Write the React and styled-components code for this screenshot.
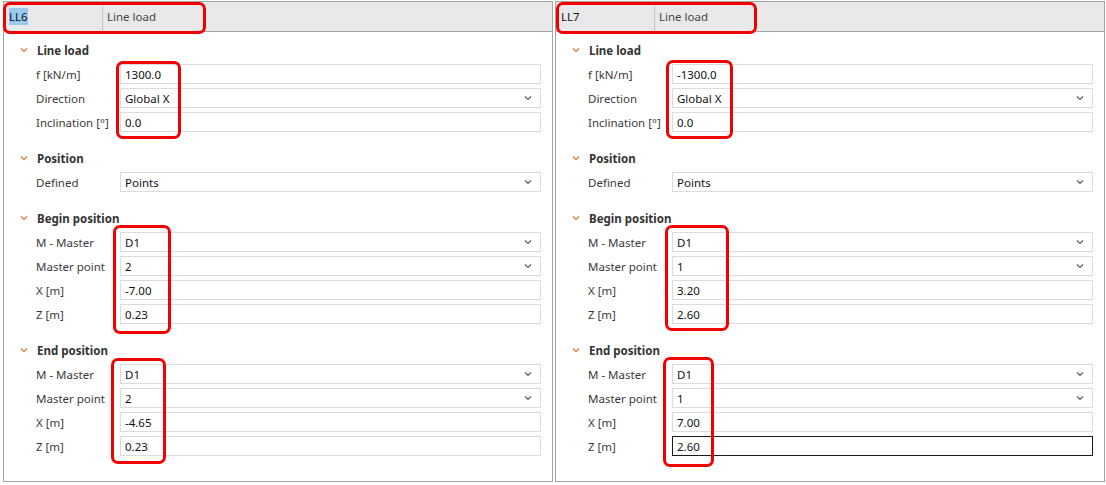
import React from "react";
import styled, { createGlobalStyle } from "styled-components";

const GlobalStyle = createGlobalStyle`
  html, body { margin: 0; padding: 0; background: #ffffff; }
  body { font-family: "Noto Sans", "Liberation Sans", sans-serif; font-size: 11.5px; color: #333; }
`;

const Page = styled.div`
  display: flex;
  gap: 2px;
  padding: 1px 0 0 3px;
`;

const Panel = styled.div`
  position: relative;
  box-sizing: border-box;
  width: ${(p) => p.$w}px;
  height: 481px;
  border: 1px solid #a3a3a3;
  background: #fff;
`;

const Header = styled.div`
  display: flex;
  height: 29px;
  background: #e9e9e9;
  border-bottom: 1px solid #a3a3a3;
`;

const IdCell = styled.div`
  width: 99px;
  border-right: 1px solid #c4c4c4;
  display: flex;
  align-items: center;
  padding-left: 5px;
  box-sizing: border-box;
  color: #111;
`;

const Selected = styled.span`
  background: ${(p) => (p.$sel ? "#99c9ef" : "transparent")};
  padding: 1px 0;
`;

const NameCell = styled.div`
  display: flex;
  align-items: center;
  padding-left: 4px;
  color: #444;
`;

const Body = styled.div`
  padding: 6px 11px 0 0;
`;

const Section = styled.div`
  margin-bottom: 12px;
`;

const SectionHead = styled.div`
  height: 24px;
  display: flex;
  align-items: center;
  padding-left: 16px;
  font-weight: 700;
  color: #333;
  gap: 9px;
`;

const Row = styled.div`
  display: grid;
  grid-template-columns: 116px 1fr;
  height: 24px;
  align-items: center;
`;

const Label = styled.div`
  padding-left: 32px;
  color: #3a3a3a;
  white-space: nowrap;
`;

const Field = styled.div`
  box-sizing: border-box;
  height: 20px;
  border: 1px solid ${(p) => (p.$focus ? "#1a1a1a" : "#dcdcdc")};
  display: flex;
  align-items: center;
  justify-content: space-between;
  padding: 0 8px 0 4px;
  color: #111;
`;

const Mark = styled.div`
  position: absolute;
  box-sizing: border-box;
  border: 3px solid #f20000;
  border-radius: 7px;
  pointer-events: none;
`;

const Chevron = ({ color = "#e8742a" }) => (
  <svg width="8" height="6" viewBox="0 0 8 6">
    <path d="M1 1.5 L4 4.5 L7 1.5" fill="none" stroke={color} strokeWidth="1.1" />
  </svg>
);

const makeSections = (v) => [
  {
    title: "Line load",
    rows: [
      { label: "f [kN/m]", value: v.f },
      { label: "Direction", value: "Global X", select: true },
      { label: "Inclination [°]", value: "0.0" },
    ],
  },
  { title: "Position", rows: [{ label: "Defined", value: "Points", select: true }] },
  {
    title: "Begin position",
    rows: [
      { label: "M - Master", value: "D1", select: true },
      { label: "Master point", value: v.bp, select: true },
      { label: "X [m]", value: v.bx },
      { label: "Z [m]", value: v.bz },
    ],
  },
  {
    title: "End position",
    rows: [
      { label: "M - Master", value: "D1", select: true },
      { label: "Master point", value: v.ep, select: true },
      { label: "X [m]", value: v.ex },
      { label: "Z [m]", value: v.ez, focus: v.focusLast },
    ],
  },
];

const panels = [
  {
    id: "LL6",
    sel: true,
    w: 550,
    values: { f: "1300.0", bp: "2", bx: "-7.00", bz: "0.23", ep: "2", ex: "-4.65", ez: "0.23" },
    marks: [
      { l: -1, t: 0, w: 203, h: 32 },
      { l: 112, t: 59, w: 65, h: 78 },
      { l: 109, t: 223, w: 58, h: 109 },
      { l: 107, t: 356, w: 55, h: 106 },
    ],
  },
  {
    id: "LL7",
    sel: false,
    w: 550,
    values: { f: "-1300.0", bp: "1", bx: "3.20", bz: "2.60", ep: "1", ex: "7.00", ez: "2.60", focusLast: true },
    marks: [
      { l: 0, t: 0, w: 201, h: 32 },
      { l: 110, t: 58, w: 67, h: 79 },
      { l: 109, t: 223, w: 64, h: 106 },
      { l: 107, t: 355, w: 51, h: 110 },
    ],
  },
];

function LoadPanel({ p }) {
  const sections = makeSections(p.values);
  return (
    <Panel $w={p.w}>
      <Header>
        <IdCell>
          <Selected $sel={p.sel}>{p.id}</Selected>
        </IdCell>
        <NameCell>Line load</NameCell>
      </Header>
      <Body>
        {sections.map((s) => (
          <Section key={s.title}>
            <SectionHead>
              <Chevron />
              {s.title}
            </SectionHead>
            {s.rows.map((r) => (
              <Row key={r.label}>
                <Label>{r.label}</Label>
                <Field $focus={r.focus}>
                  <span>{r.value}</span>
                  {r.select && <Chevron color="#555" />}
                </Field>
              </Row>
            ))}
          </Section>
        ))}
      </Body>
      {p.marks.map((m, i) => (
        <Mark key={i} style={{ left: m.l, top: m.t, width: m.w, height: m.h }} />
      ))}
    </Panel>
  );
}

export default function App() {
  return (
    <>
      <GlobalStyle />
      <Page>
        {panels.map((p) => (
          <LoadPanel key={p.id} p={p} />
        ))}
      </Page>
    </>
  );
}
